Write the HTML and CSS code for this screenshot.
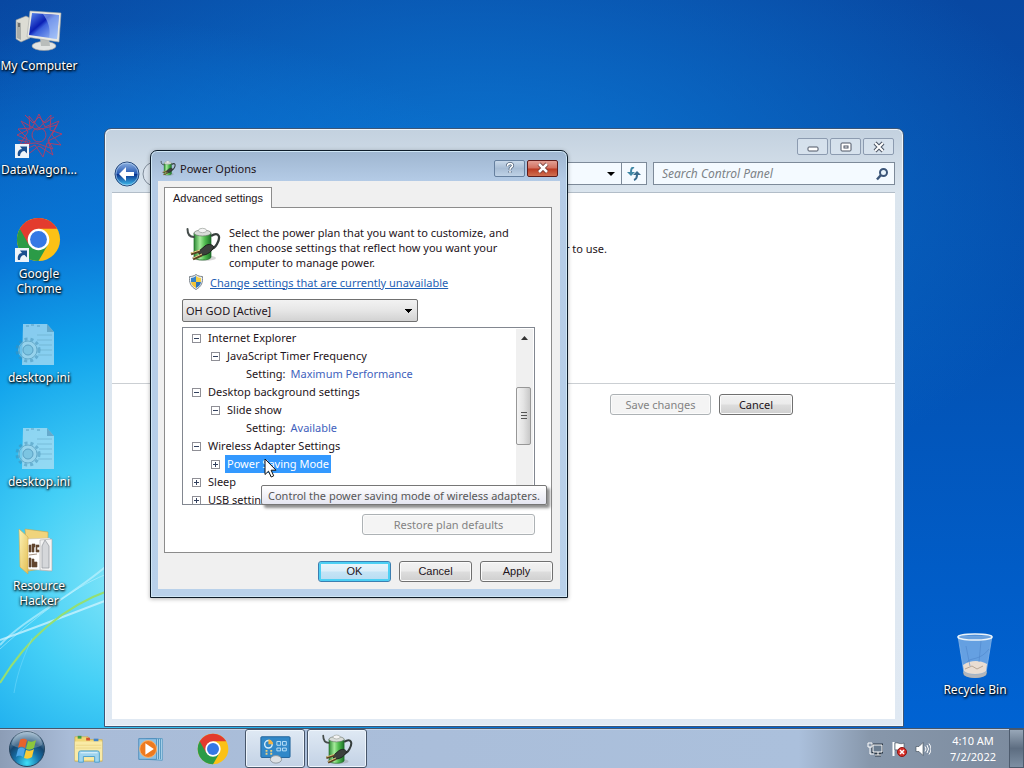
FILE: index.html
```html
<!DOCTYPE html>
<html lang="en">
<head>
    <meta charset="UTF-8">
    <meta name="viewport" content="width=device-width, initial-scale=1.0">
    <title>Power Options</title>
    <link rel="stylesheet" href="styles.css">
</head>
<body>
    <!-- shared icons -->
    <svg class="sprite" aria-hidden="true">
        <defs>
            <linearGradient id="gGreen" x1="0" x2="1" y1="0" y2="0">
                <stop offset="0" stop-color="#2d8a34"/>
                <stop offset=".35" stop-color="#a5eb9b"/>
                <stop offset=".65" stop-color="#4dba4c"/>
                <stop offset="1" stop-color="#1d7028"/>
            </linearGradient>
            <linearGradient id="gScreen" x1="0" x2="1" y1="0" y2="1">
                <stop offset="0" stop-color="#5d8dee"/>
                <stop offset=".4" stop-color="#0a1fb4"/>
                <stop offset=".5" stop-color="#3c62dc"/>
                <stop offset="1" stop-color="#a9c8fa"/>
            </linearGradient>
            <linearGradient id="gFolder" x1="0" x2="1" y1="0" y2="1">
                <stop offset="0" stop-color="#fdf3b8"/>
                <stop offset="1" stop-color="#e3bf55"/>
            </linearGradient>
            <radialGradient id="gOrb" cx=".5" cy=".9" r=".9">
                <stop offset="0" stop-color="#3fe0f8"/>
                <stop offset=".4" stop-color="#1670a8"/>
                <stop offset=".65" stop-color="#15466f"/>
                <stop offset="1" stop-color="#9dbad0"/>
            </radialGradient>
            <linearGradient id="gBack" x1="0" x2="0" y1="0" y2="1">
                <stop offset="0" stop-color="#8fb2e2"/>
                <stop offset=".48" stop-color="#2a5cb4"/>
                <stop offset=".52" stop-color="#0b3590"/>
                <stop offset="1" stop-color="#3fc2f0"/>
            </linearGradient>
        </defs>
        <symbol id="battery" viewBox="0 0 36 36">
            <ellipse cx="19" cy="32" rx="12" ry="3" fill="#888" opacity=".35"/>
            <path d="M9 7v24c0 4 17 4 17 0V7z" fill="url(#gGreen)" stroke="#1e6b28" stroke-width=".7"/>
            <ellipse cx="17.500" cy="7" rx="8.500" ry="3" fill="#d8dcd8" stroke="#6d776d" stroke-width=".7"/>
            <ellipse cx="17.500" cy="4.500" rx="4" ry="2.200" fill="#f4f4f4" stroke="#8c948c" stroke-width=".6"/>
            <path d="M2.500 3c0 5 2 8 6.500 8" fill="none" stroke="#454d4b" stroke-width="2" stroke-linecap="round"/>
            <path d="M26 10c8-5 10 1 6 8-2 4-4 5-8 6" fill="none" stroke="#363e3c" stroke-width="2.300"/>
            <path d="M13 26l7-6c4-3 8-1 9 1-3 6-9 9-14 8z" fill="#3c403c" stroke="#1d201d"/>
            <path d="M15 25l-9 3M17 29l-9 4" stroke="#5a4120" stroke-width="2.600"/>
            <path d="M15 24l-9 3M17 28l-9 4" stroke="#e8d28c" stroke-width="1"/>
        </symbol>
        <symbol id="chrome" viewBox="0 0 48 48">
            <circle cx="24" cy="24" r="23" fill="#fbc116"/>
            <path d="M24 24L4.100 12.500A23 23 0 0 0 24 47l10-17.300z" fill="#2b9b47"/>
            <path d="M4.100 12.500A23 23 0 0 1 43.900 12.500H24L14 30z" fill="#e33b2e"/>
            <circle cx="24" cy="24" r="11.500" fill="#fff"/>
            <circle cx="24" cy="24" r="9" fill="#3578e5"/>
        </symbol>
        <symbol id="shortcut" viewBox="0 0 14 14">
            <path d="M0 0h14v14H0z" fill="#eef4fa"/>
            <path d="M3 12C2 8 4 5 7 5L5 2.500h7V9.500L9.500 7C7 7 5 9 5 12z" fill="#1b4f8f"/>
        </symbol>
        <symbol id="inifile" viewBox="0 0 48 48">
            <path d="M8 4h24l7 8v33H7z" fill="#b6e1f2" opacity=".72"/>
            <path d="M32 4v8h7z" fill="#5b9fc2" opacity=".8"/>
            <path d="M11 6h3M16 5h3M22 6h3" stroke="#3682a8" opacity=".6"/>
            <path d="M22 15h15M22 20h15M24 25h13M25 30h12M23 35h14" stroke="#69acc9" opacity=".6"/>
            <circle cx="13" cy="30" r="10" fill="#9ed4ea" opacity=".65"/>
            <circle cx="13" cy="30" r="11" fill="none" stroke="#418db4" stroke-width="3" stroke-dasharray="3 3" opacity=".5"/>
            <circle cx="13" cy="30" r="9" fill="none" stroke="#4f9abd" opacity=".7"/>
            <circle cx="13" cy="30" r="5" fill="#6dbddd" stroke="#3b86ad" opacity=".65"/>
        </symbol>
    </svg>

    <main class="desktop">
        <svg class="streaks" viewBox="0 0 110 150" aria-hidden="true">
            <path d="M0 67C25 40 70 20 110-15" fill="none" stroke="#c9f5ff" stroke-width="2" opacity=".6"/>
            <path d="M0 71C40 35 80 5 110-5" fill="none" stroke="#c9f5ff" opacity=".5"/>
            <path d="M0 62C40 48 70 36 110 21" fill="none" stroke="#d9f7ff" stroke-width="2" opacity=".7"/>
            <path d="M0 105C24 65 60 30 110 12" fill="none" stroke="#95df72" stroke-width="2"/>
            <path d="M14 115C18 90 27 72 32 60" fill="none" stroke="#8ce3ff" opacity=".4"/>
        </svg>
        <nav class="shortcuts">
            <a class="shortcut" href="#computer">
                <svg class="icon-lg" viewBox="0 0 48 48">
                    <path d="M1 12l10-4 4 2v20L6 34l-5-3z" fill="#dcdcd4" stroke="#8d9296" stroke-width=".6"/>
                    <path d="M2 14l4 1v17l-4-2z" fill="#aaada9"/>
                    <path d="M3 16h2M3 18h2" stroke="#333"/>
                    <ellipse cx="29" cy="38" rx="12" ry="4.500" fill="#e2e4e2" stroke="#999" stroke-width=".6"/>
                    <path d="M25 30h9l1 8h-9z" fill="#b9bdbb"/>
                    <path d="M15 3l31 2-2 29-32-5z" fill="#e9e9e3" stroke="#a6a9a8" stroke-width=".6"/>
                    <path d="M17 5l27 2-2 24-28-4z" fill="url(#gScreen)"/>
                    <path d="M28 6l16 1-2 24-8-1c2-9-1-17-6-24z" fill="#a8c4f8" opacity=".55"/>
                </svg>
                <span>My Computer</span>
            </a>
            <a class="shortcut" href="#datawagon">
                <svg class="icon-lg" viewBox="0 0 48 48">
                    <g fill="none" stroke="#c43a5c" stroke-width="1" opacity=".85">
                        <circle cx="24" cy="23" r="7"/>
                        <path d="M24 2l6 13 14-6-7 14 9 10-14-2-4 14-8-12-13 6 5-13L3 17l14-1z"/>
                        <path d="M14 4l10 12L36 3l-1 15 12 4-14 7 5 14-14-9-12 9 3-14L2 23l13-6z"/>
                        <path d="M6 9l16 9 20-5-9 15 5 9-17-6-16 1 8-12zM10 3l8 8 6-6 6 6 9-6M3 28l10 2-2 10"/>
                    </g>
                    <use href="#shortcut" x="0" y="32" width="14" height="14"/>
                </svg>
                <span>DataWagon...</span>
            </a>
            <a class="shortcut" href="#chrome-app">
                <svg class="icon-lg" viewBox="0 0 48 48">
                    <use href="#chrome" x="1" y="1" width="45" height="45"/>
                    <use href="#shortcut" x="0" y="32" width="14" height="14"/>
                </svg>
                <span>Google Chrome</span>
            </a>
            <a class="shortcut" href="#ini1">
                <svg class="icon-lg"><use href="#inifile"/></svg>
                <span>desktop.ini</span>
            </a>
            <a class="shortcut" href="#ini2">
                <svg class="icon-lg"><use href="#inifile"/></svg>
                <span>desktop.ini</span>
            </a>
            <a class="shortcut" href="#reshacker">
                <svg class="icon-lg" viewBox="0 0 48 48">
                    <path d="M10 1l23 3v36l-20 3z" fill="#f0d47c" stroke="#c9a548" stroke-width=".6"/>
                    <path d="M12 11l23-1v33l-23-2z" fill="#fff" stroke="#bbb" stroke-width=".5"/>
                    <path d="M14 17h2v7h-2zM17 16h3v3h-1v5h-2zM21 17h3v2h-2v3h2v2h-3zM14 30h2v9h-2zM17 31h2v3h3v5h-5zM14 27l8-1" fill="#63462f" stroke="#63462f" stroke-width=".6"/>
                    <path d="M25 12l12-1v32l-12-1z" fill="#f3f3f3" stroke="#a5a5a5" stroke-width=".6"/>
                    <path d="M27 40V18l3-6 4 6v22z" fill="#d5d7da" stroke="#92969c" stroke-width=".7"/>
                    <path d="M4 1l9 8v37L5 39z" fill="url(#gFolder)" stroke="#d0ad4e" stroke-width=".6"/>
                </svg>
                <span>Resource Hacker</span>
            </a>
        </nav>
        <a class="shortcut recycle" href="#recycle">
            <svg class="icon-lg" viewBox="0 0 48 48">
                <ellipse cx="24" cy="41" rx="12" ry="5" fill="#89929c"/>
                <path d="M7 4l6 37c2 5 20 5 22 0l6-37z" fill="#a8ccf0" opacity=".6" stroke="#d9ebfa" stroke-width=".8"/>
                <path d="M12 33c7-5 17-5 24-1l-1 7c-4 4-18 4-22 0z" fill="#e9ddd2"/>
                <path d="M14 37l7-3 5 3 6-3" fill="none" stroke="#b9a898"/>
                <path d="M16 30c4-5 13-1 22-13M15 14l4 20M30 9l-2 21" fill="none" stroke="#4c83c8" opacity=".55"/>
                <path d="M13 39c3 5 19 5 22 0v4c-4 4-18 4-22 0z" fill="#b4b6ba"/>
                <ellipse cx="24" cy="5" rx="17" ry="3" fill="#6ba0dc" fill-opacity=".5" stroke="#ecf4fa" stroke-width="1.500"/>
            </svg>
            <span>Recycle Bin</span>
        </a>

        <section class="window" aria-label="Edit Plan Settings">
            <div class="window-controls">
                <button class="frame-btn" aria-label="Minimize"><svg viewBox="0 0 16 12"><rect x="3" y="6" width="10" height="4" rx="1" fill="#fff" stroke="#4c5565"/></svg></button>
                <button class="frame-btn" aria-label="Maximize"><svg viewBox="0 0 16 12"><rect x="3" y="2" width="10" height="8" rx="1" fill="#fff" stroke="#4c5565"/><rect x="6" y="5" width="4" height="2" fill="#fff" stroke="#4c5565"/></svg></button>
                <button class="frame-btn" aria-label="Close"><svg viewBox="0 0 16 12"><path d="M4 2l8 8M12 2l-8 8" stroke="#4c5565" stroke-width="4"/><path d="M4 2l8 8M12 2l-8 8" stroke="#fff" stroke-width="2"/></svg></button>
            </div>
            <div class="toolbar">
                <button class="round-btn" aria-label="Back">
                    <svg viewBox="0 0 26 26"><circle cx="13" cy="13" r="12" fill="url(#gBack)" stroke="#294a7c"/><circle cx="13" cy="13" r="11" fill="none" stroke="#bcd8f4" opacity=".6"/><path d="M5 13l7-7v5h8v4h-8v5z" fill="#fff"/></svg>
                </button>
                <button class="round-btn" aria-label="Forward">
                    <svg viewBox="0 0 26 26"><circle cx="13" cy="13" r="12" fill="#d9e2ec" stroke="#7f8b99"/></svg>
                </button>
                <div class="address">
                    <button class="address-drop" aria-label="Previous locations"><svg viewBox="0 0 8 4"><path d="M0 0h8L4 4z"/></svg></button>
                    <button class="refresh" aria-label="Refresh">
                        <svg viewBox="0 0 16 14"><path d="M8 0C5 1 5 3 5 6" fill="none" stroke="#3f87a5" stroke-width="2"/><path d="M1 5h8L5 9z" fill="#3f87a5"/><path d="M8 13c3-1 3-3 3-5" fill="none" stroke="#386b8c" stroke-width="2"/><path d="M7 8h8l-4-4z" fill="#386b8c"/></svg>
                    </button>
                </div>
                <form class="search">
                    <input type="text" aria-label="Search" placeholder="Search Control Panel">
                    <svg viewBox="0 0 14 14" aria-hidden="true"><circle cx="8.500" cy="5.500" r="3.500" fill="#eaf5fc" stroke="#3c5679" stroke-width="2"/><path d="M6 8l-4 4.500" stroke="#3c5679" stroke-width="2.500"/></svg>
                </form>
            </div>
            <div class="window-content">
                <p class="plan-text">computer to use.</p>
                <div class="plan-actions">
                    <button class="btn btn-save" disabled>Save changes</button>
                    <button class="btn">Cancel</button>
                </div>
            </div>
        </section>

        <section class="dialog" role="dialog" aria-label="Power Options">
            <header class="dialog-title">
                <svg class="icon-sm"><use href="#battery"/></svg>
                <h1>Power Options</h1>
                <button class="frame-btn help" aria-label="Help"><svg viewBox="0 0 14 14"><path d="M4 5c0-4 6-4 6-1 0 2-3 2-3 5M7 10.500v2" fill="none" stroke="#4f627a" stroke-width="3.600"/><path d="M4 5c0-4 6-4 6-1 0 2-3 2-3 5M7 10.500v2" fill="none" stroke="#fff" stroke-width="1.800"/></svg></button>
                <button class="frame-btn close" aria-label="Close"><svg viewBox="0 0 16 12"><path d="M4 2l8 8M12 2l-8 8" stroke="#69332f" stroke-width="4"/><path d="M4 2l8 8M12 2l-8 8" stroke="#fff" stroke-width="2.500"/></svg></button>
            </header>
            <div class="dialog-body">
                <button class="tab" role="tab" aria-selected="true">Advanced settings</button>
                <div class="panel">
                    <div class="intro">
                        <svg class="icon-md"><use href="#battery"/></svg>
                        <p>Select the power plan that you want to customize, and then choose settings that reflect how you want your computer to manage power.</p>
                    </div>
                    <div class="elevate">
                        <svg class="shield" viewBox="0 0 14 16">
                            <path d="M7 .500C9 2 11 2.500 13.500 2.500c.5 6-1 10-6.500 13C1.500 12.500 0 8.500.500 2.500 3 2.500 5 2 7 .500z" fill="#e9edf0" stroke="#7d858c"/>
                            <path d="M7 2v6H2V4c2 0 3.500-.7 5-2z" fill="#3482c8"/>
                            <path d="M7 2v6h5V4c-2 0-3.500-.7-5-2z" fill="#f3cf45"/>
                            <path d="M7 14V8H2c.5 3 2 4.500 5 6z" fill="#f1c337"/>
                            <path d="M7 14V8h5c-.5 3-2 4.500-5 6z" fill="#2c72ba"/>
                        </svg>
                        <a href="#change">Change settings that are currently unavailable</a>
                    </div>
                    <select class="plan" aria-label="Power plan">
                        <option>OH GOD [Active]</option>
                    </select>
                    <div class="tree-box">
                        <ul class="tree">
                            <li><button class="twist" aria-label="Collapse"></button>Internet Explorer</li>
                            <li class="child"><button class="twist" aria-label="Collapse"></button>JavaScript Timer Frequency</li>
                            <li class="setting">Setting: <a href="#js">Maximum Performance</a></li>
                            <li><button class="twist" aria-label="Collapse"></button>Desktop background settings</li>
                            <li class="child"><button class="twist" aria-label="Collapse"></button>Slide show</li>
                            <li class="setting">Setting: <a href="#slides">Available</a></li>
                            <li><button class="twist" aria-label="Collapse"></button>Wireless Adapter Settings</li>
                            <li class="child"><button class="twist plus" aria-label="Expand"></button><span class="selected">Power Saving Mode</span></li>
                            <li><button class="twist plus" aria-label="Expand"></button>Sleep</li>
                            <li><button class="twist plus" aria-label="Expand"></button>USB settings</li>
                        </ul>
                        <div class="scrollbar">
                            <button class="scroll-up" aria-label="Scroll up"><svg viewBox="0 0 7 4"><path d="M0 4h7L3.500 0z" fill="#333"/></svg></button>
                            <div class="thumb"></div>
                        </div>
                    </div>
                    <button class="btn btn-restore" disabled>Restore plan defaults</button>
                </div>
                <div class="dialog-actions">
                    <button class="btn btn-default">OK</button>
                    <button class="btn">Cancel</button>
                    <button class="btn">Apply</button>
                </div>
            </div>
            <div class="tooltip" role="tooltip">Control the power saving mode of wireless adapters.</div>
            <svg class="cursor" viewBox="0 0 13 20"><path d="M1 1v15.500l3.500-3.300 2.700 5.800 2.500-1.200-2.600-5.600H12z" fill="#fff" stroke="#111"/></svg>
        </section>
    </main>

    <footer class="taskbar">
        <button class="start" aria-label="Start">
            <svg viewBox="0 0 38 38">
                <circle cx="19" cy="19" r="17.500" fill="url(#gOrb)" stroke="#27455f"/>
                <path d="M4 15a15 15 0 0 1 30 0c-8 5-22 5-30 0z" fill="#fff" opacity=".22"/>
                <path d="M12 10c3-2 5-1 7 0l-2 8c-2-1-4-2-7 0z" fill="#e8622c"/>
                <path d="M20 11c3 1 5 1 8-1l-2 8c-3 2-5 2-8 1z" fill="#8dc63c"/>
                <path d="M10 19c3-2 5-1 7 0l-2 8c-2-1-4-2-7 0z" fill="#4da6e8"/>
                <path d="M18 20c3 1 5 1 8-1l-2 8c-3 2-5 2-8 1z" fill="#fbcb35"/>
            </svg>
        </button>
        <button class="task" aria-label="Windows Explorer">
            <svg viewBox="0 0 34 32">
                <path d="M2 3h14l2 3h13v23H2z" fill="#f1d776" stroke="#c6a544" stroke-width=".6"/>
                <path d="M5 2h4v3H5z" fill="#3f9e45"/><path d="M14 4h4v3h-4z" fill="#d2502f"/><path d="M22 5h5v3h-5z" fill="#4284c9"/>
                <path d="M2 8h29v20H2z" fill="#f9eaa6"/>
                <path d="M3 12h27M3 15h27" stroke="#ecd586"/>
                <path d="M6 30V20q0-2 2-2h18q2 0 2 2v10h-5v-6H11v6z" fill="#9fd4ef" stroke="#4a9fcd"/>
                <path d="M8 20h18" stroke="#e8f7ff"/>
            </svg>
        </button>
        <button class="task" aria-label="Windows Media Player">
            <svg viewBox="0 0 34 32">
                <path d="M12 5h17v23l-17-1z" fill="#b8dcf0" stroke="#5c9cc4"/><path d="M25 5v22M27 5v22" stroke="#4c91bc"/>
                <path d="M4 5h19v22H4z" fill="#8dc0e4" stroke="#4d8cba"/>
                <circle cx="14" cy="16" r="9" fill="#ee7a20" stroke="#f7b571"/>
                <path d="M11 10l9 6-9 6z" fill="#fff"/>
            </svg>
        </button>
        <button class="task" aria-label="Google Chrome"><svg><use href="#chrome"/></svg></button>
        <button class="task open" aria-label="Control Panel">
            <svg viewBox="0 0 34 32">
                <rect x="2" y="3" width="31" height="22" rx="1" fill="#3188c8" stroke="#1e6199"/>
                <circle cx="10" cy="11" r="4" fill="none" stroke="#d3ecfb" stroke-width="1.500"/><path d="M10 11V6a5 5 0 0 1 5 5z" fill="#f3b342"/>
                <path d="M19 8h4v4h-4zM25 8h4v4h-4zM19 15h4v3h-4zM25 15h4v3h-4z" fill="none" stroke="#bfe3fa"/>
                <path d="M7 18h2M12 18h2M7 21h2M12 21h2" stroke="#f0cf7a" stroke-width="2"/>
                <ellipse cx="18" cy="27" rx="6" ry="4" fill="#dde1e4" stroke="#8e969d"/>
            </svg>
        </button>
        <button class="task open" aria-label="Power Options"><svg><use href="#battery"/></svg></button>
        <div class="tray">
            <svg class="icon-tray" viewBox="0 0 16 16"><path d="M6 4h9v7H6zM8 14h6M11 11v3" fill="#68798c" stroke="#2c3947" stroke-width="3"/><path d="M6 4h9v7H6zM8 14h6M11 11v3" fill="#6b7d90" stroke="#fff"/><path d="M1 2v4h4V2M2 1v2M4 1v2M3 6v7h4" fill="none" stroke="#fff"/></svg>
            <svg class="icon-tray" viewBox="0 0 16 16"><path d="M2.500 1v14" stroke="#fff" stroke-width="2"/><path d="M4 2c3-1 5 2 9 0v7c-4 2-6-1-9 0z" fill="#fff" stroke="#3a4653" stroke-width=".6"/><circle cx="11" cy="11" r="4.500" fill="#d8302a" stroke="#8c1511"/><path d="M9 9l4 4M13 9l-4 4" stroke="#fff" stroke-width="1.500"/></svg>
            <svg class="icon-tray" viewBox="0 0 16 16"><path d="M1 5.500h3l4-4v13l-4-4H1z" fill="#fff" stroke="#3a4653" stroke-width=".6"/><path d="M10 5.500q2 2.500 0 5M12 4q3 4 0 8M14 2.500q4 5.500 0 11" fill="none" stroke="#fff"/></svg>
            <time class="clock" datetime="2022-07-02T04:10">4:10 AM<br>7/2/2022</time>
        </div>
        <button class="show-desktop" aria-label="Show desktop"></button>
    </footer>
</body>
</html>
```
FILE: styles.css
```css
:root {
    --frame: #b9d1ea;
    --line: #828790;
    --link: #1f5fb4;
    --value: #3f62bd;
    --text: #1e1420;
}
* {
    box-sizing: border-box;
}
html, body {
    height: 100%;
    margin: 0;
}
body {
    display: flex;
    flex-direction: column;
    overflow: hidden;
    font: 11px/15px "Noto Sans", "Open Sans", sans-serif;
    color: var(--text);
}
button, input, select {
    font: inherit;
    color: inherit;
}
button {
    padding: 0;
    border: 0;
    background: none;
}
svg {
    display: block;
    flex: none;
}
.sprite {
    position: absolute;
    width: 0;
    height: 0;
}

/* desktop */
.desktop {
    position: relative;
    flex: 1;
    min-height: 0;
    background:
        radial-gradient(ellipse 560px 560px at 130px 580px, #84e6f8 0, #44cff6 20%, #12a4ec 42%, rgba(9, 121, 217, 0.9) 62%, rgba(7, 84, 185, 0) 100%),
        radial-gradient(ellipse 600px 330px at 480px 200px, #0c78d4 0, rgba(8, 90, 190, 0) 100%),
        linear-gradient(to bottom, #0848a2 0, #0350b0 40%, #0063d3 100%);
}
.streaks {
    position: absolute;
    left: 0;
    bottom: 0;
    width: 110px;
    height: 150px;
    overflow: visible;
}
.shortcuts {
    position: relative;
    display: grid;
    grid-auto-rows: 104px;
    width: 78px;
    padding-top: 8px;
}
.shortcut {
    display: flex;
    flex-direction: column;
    align-items: center;
    gap: 2px;
    color: #fff;
    font-size: 12px;
    text-align: center;
    text-decoration: none;
    text-shadow: 1px 1px 2px #000, 0 1px 3px #000;
}
.recycle {
    position: absolute;
    right: 9px;
    bottom: 31px;
    width: 80px;
}
.icon-lg {
    width: 48px;
    height: 48px;
}
.icon-md {
    width: 36px;
    height: 38px;
}
.icon-sm {
    width: 16px;
    height: 16px;
}

/* control panel window */
.window {
    position: absolute;
    top: 128px;
    right: 120px;
    bottom: 1px;
    left: 104px;
    display: flex;
    flex-direction: column;
    padding: 0 8px 7px 7px;
    border: 1px solid #3c5677;
    border-radius: 7px 7px 0 0;
    background: linear-gradient(to bottom, #c3d1df 0, #dbe5ee 64px, #e0e9f3 100%);
    box-shadow: inset 0 0 0 1px #eef5fb;
}
.window-controls {
    display: flex;
    justify-content: flex-end;
    gap: 2px;
    padding: 9px 1px 0 0;
}
.frame-btn {
    display: flex;
    align-items: center;
    justify-content: center;
    width: 31px;
    height: 17px;
    border: 1px solid #8c9bb0;
    border-radius: 2px;
    background: rgba(225, 235, 245, 0.5);
}
.frame-btn svg {
    width: 16px;
    height: 12px;
}
.toolbar {
    display: flex;
    align-items: center;
    gap: 2px;
    height: 37px;
    padding: 0 0 0 2px;
}
.round-btn svg {
    width: 26px;
    height: 26px;
}
.address {
    display: flex;
    flex: 1;
    height: 23px;
    margin-left: 10px;
    border: 1px solid #7d8a99;
    background: #f4faff;
}
.address-drop {
    width: 20px;
    margin-left: auto;
}
.address-drop svg {
    width: 8px;
    height: 4px;
    margin: auto;
}
.refresh {
    width: 25px;
    border-left: 1px solid #7d8a99;
}
.refresh svg {
    width: 16px;
    height: 14px;
    margin: auto;
}
.search {
    display: flex;
    align-items: center;
    width: 242px;
    height: 23px;
    margin-left: 4px;
    padding: 0 5px 0 8px;
    border: 1px solid #7d8a99;
    background: #f4faff;
    font-size: 12px;
}
.search input {
    flex: 1;
    min-width: 0;
    padding: 0;
    border: 0;
    outline: 0;
    background: none;
    font-style: italic;
}
.search input::placeholder {
    color: #7c8287;
}
.search svg {
    width: 14px;
    height: 14px;
}
.window-content {
    flex: 1;
    border-top: 1px solid #b2bdc8;
    background: #fff;
}
.plan-text {
    width: 495px;
    margin: 0;
    padding-top: 48px;
    text-align: right;
}
.plan-actions {
    display: flex;
    gap: 8px;
    margin-top: 127px;
    padding: 10px 102px 0 0;
    justify-content: flex-end;
    border-top: 1px solid #cbcfd3;
}

/* buttons */
.btn {
    width: 74px;
    height: 21px;
    border: 1px solid #707070;
    border-radius: 3px;
    background: linear-gradient(to bottom, #f2f2f2 0, #ebebeb 48%, #dddddd 52%, #cfcfcf 100%);
    box-shadow: inset 0 0 0 1px #fbfbfb;
}
.btn:disabled {
    border-color: #adb2b5;
    background: #f4f4f4;
    color: #838383;
}
.btn-save {
    width: 101px;
}

/* power options dialog */
.dialog {
    position: absolute;
    top: 150px;
    left: 150px;
    width: 418px;
    padding: 0 7px 8px;
    border: 1px solid #0d1b28;
    border-radius: 7px 7px 0 0;
    background: linear-gradient(to bottom, #9fb6d0 0, #b4cbe6 30px, var(--frame) 100%);
    box-shadow: inset 0 0 0 1px #cfe6f5, 0 1px 4px rgba(0, 0, 0, 0.3);
}
.dialog-title {
    display: flex;
    align-items: center;
    height: 30px;
    padding: 4px 2px 0;
}
.dialog-title h1 {
    flex: 1;
    margin: 0;
    padding-left: 4px;
    font-size: 11px;
    font-weight: 400;
}
.help {
    margin-right: 2px;
    border-color: #66809f;
    background: linear-gradient(to bottom, #c9d9ea 0, #a8bdd5 50%, #bfd2e6 100%);
}
.help svg {
    width: 12px;
    height: 12px;
}
.close {
    border-color: #5f1c1b;
    background: linear-gradient(to bottom, #e3a095 0, #d2705f 48%, #bb3a22 52%, #d07050 100%);
}
.dialog-body {
    padding: 6px 8px 7px 6px;
    background: #f0f0f0;
}
.tab {
    position: relative;
    z-index: 1;
    display: block;
    height: 21px;
    padding: 0 8px;
    border: 1px solid #8c8c8c;
    border-bottom: 0;
    background: #fff;
    font-family: "Liberation Sans", Arial, sans-serif;
}
.panel {
    display: flex;
    flex-direction: column;
    margin-top: -1px;
    padding: 17px 16px 17px 17px;
    border: 1px solid #8c8c8c;
    background: #fff;
}
.intro {
    display: flex;
    gap: 8px;
    padding-left: 3px;
}
.intro p {
    width: 300px;
    margin: 0;
}
.elevate {
    display: flex;
    align-items: center;
    gap: 7px;
    padding: 4px 0 0 7px;
}
.shield {
    width: 14px;
    height: 16px;
}
.elevate a {
    color: var(--link);
}
.plan {
    appearance: none;
    width: 236px;
    height: 23px;
    margin-top: 9px;
    padding: 0 3px;
    border: 1px solid #707070;
    border-radius: 2px;
    background:
        linear-gradient(to top right, transparent 50%, #000 0) no-repeat right 8px center / 4px 4px,
        linear-gradient(to top left, transparent 50%, #000 0) no-repeat right 4px center / 4px 4px,
        linear-gradient(to bottom, #f2f2f2 0, #e6e6e6 50%, #d2d2d2 100%);
}
.tree-box {
    display: flex;
    height: 178px;
    margin-top: 5px;
    padding: 1px;
    border: 1px solid var(--line);
    overflow: hidden;
}
.tree {
    flex: 1;
    margin: 0;
    padding: 0;
    list-style: none;
    line-height: 18px;
}
.tree li {
    display: flex;
    align-items: center;
    gap: 5px;
    height: 18px;
    padding-left: 8px;
}
.tree .child {
    padding-left: 27px;
}
.tree .setting {
    padding-left: 62px;
}
.tree a {
    color: var(--value);
    text-decoration: none;
}
.twist {
    width: 9px;
    height: 9px;
    margin-right: 2px;
    border: 1px solid #8f8f96;
    background: linear-gradient(#33415e, #33415e) no-repeat center / 5px 1px;
}
.plus {
    background:
        linear-gradient(#33415e, #33415e) no-repeat center / 5px 1px,
        linear-gradient(#33415e, #33415e) no-repeat center / 1px 5px;
}
.selected {
    margin-left: -2px;
    padding: 0 2px;
    background: #3399ff;
    color: #fff;
}
.scrollbar {
    width: 17px;
    background: #f0f0f0;
}
.scroll-up {
    display: flex;
    align-items: center;
    justify-content: center;
    width: 100%;
    height: 18px;
}
.scroll-up svg {
    width: 7px;
    height: 4px;
}
.thumb {
    width: 15px;
    height: 58px;
    margin-top: 40px;
    border: 1px solid #979797;
    border-radius: 2px;
    background:
        repeating-linear-gradient(to bottom, #555 0, #555 1px, transparent 1px, transparent 3px) no-repeat center / 6px 8px,
        linear-gradient(to right, #f3f3f3 0, #e3e3e3 50%, #c8c8c8 100%);
}
.btn-restore {
    width: 173px;
    margin: 9px 0 0 auto;
}
.dialog-actions {
    display: flex;
    justify-content: flex-end;
    gap: 8px;
    padding-top: 8px;
    margin-right: -1px;
}
.dialog-actions .btn {
    width: 73px;
    font-family: "Liberation Sans", Arial, sans-serif;
}
.btn-default {
    border-color: #3c7fb1;
    background: linear-gradient(to bottom, #edf6fb 0, #dceef9 48%, #c5e4f6 52%, #b7dcf2 100%);
    box-shadow: inset 0 0 0 2px #4dd0f4;
}
.tooltip {
    position: absolute;
    top: 334px;
    left: 110px;
    height: 20px;
    padding: 2px 6px;
    border: 1px solid #767676;
    border-radius: 2px;
    background: linear-gradient(to bottom, #fff 0, #e4e5f0 100%);
    box-shadow: 3px 3px 3px rgba(0, 0, 0, 0.45);
    color: #575757;
    white-space: nowrap;
}
.cursor {
    position: absolute;
    top: 307px;
    left: 113px;
    width: 13px;
    height: 20px;
}

/* taskbar */
.taskbar {
    display: flex;
    align-items: stretch;
    flex: none;
    gap: 2px;
    height: 40px;
    border-top: 1px solid #46566b;
    background: linear-gradient(to right, #8c9db6 0, #a9bcd8 70px, #abc0dc 78%, #8797ab 85%, #7c8b9e 100%);
    box-shadow: inset 0 1px #c3d2e6;
}
.start {
    width: 57px;
}
.start svg {
    width: 38px;
    height: 38px;
    margin-left: 8px;
}
.task {
    display: flex;
    align-items: center;
    justify-content: center;
    width: 60px;
    border: 1px solid transparent;
    border-radius: 3px;
}
.task svg {
    width: 32px;
    height: 32px;
}
.open {
    border-color: #47566a;
    background: linear-gradient(to bottom, #dfe9f4 0, #c3d2e5 100%);
    box-shadow: inset 0 0 0 1px #eef5fc;
}
.tray {
    display: flex;
    align-items: center;
    gap: 8px;
    margin-left: auto;
    color: #fff;
}
.icon-tray {
    width: 16px;
    height: 16px;
}
.clock {
    width: 68px;
    line-height: 16px;
    text-align: center;
}
.show-desktop {
    width: 15px;
    border: 1px solid #4d5b6d;
    background: linear-gradient(to bottom, #98a7b8 0, #5d6d81 50%, #7d8fa3 100%);
}
```
